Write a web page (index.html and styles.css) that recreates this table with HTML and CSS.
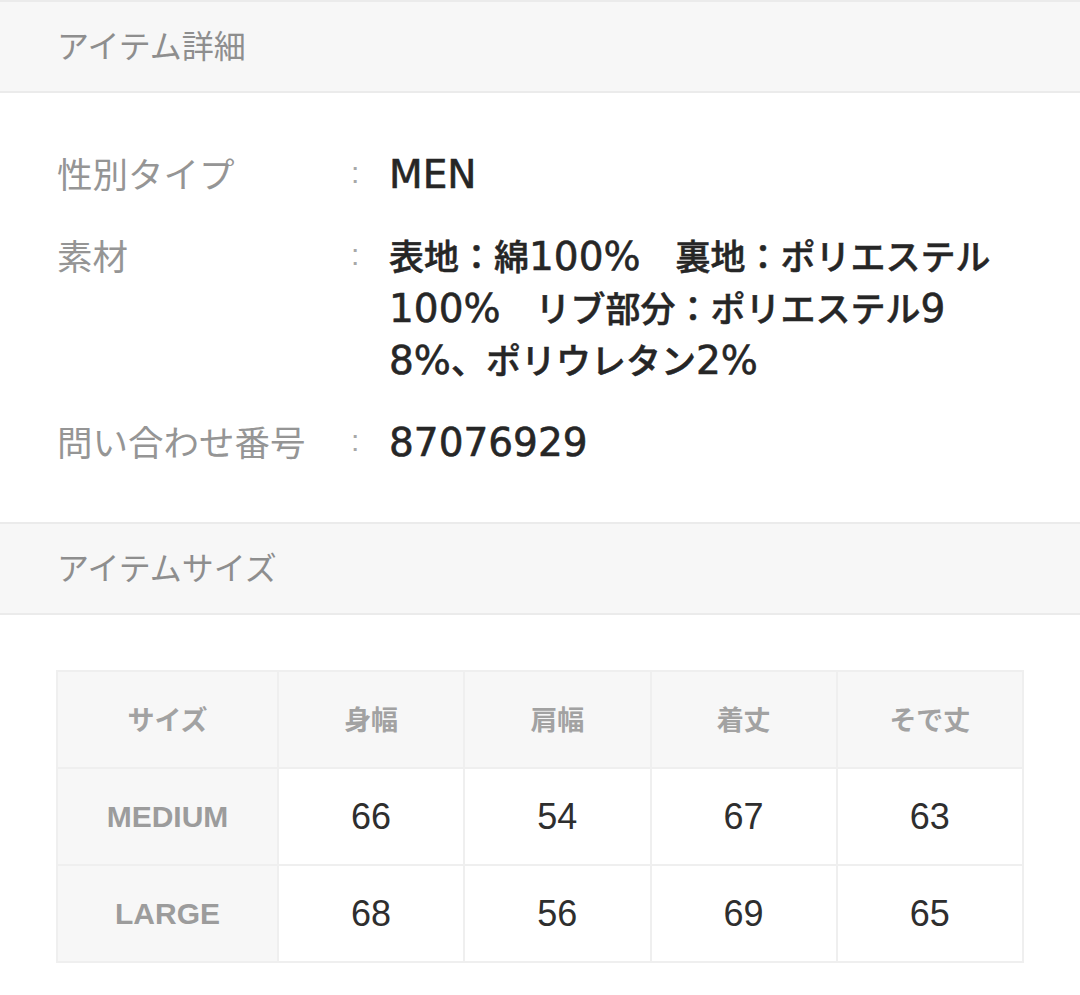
FILE: index.html
```html
<!DOCTYPE html>
<html lang="ja">
<head>
<meta charset="utf-8">
<title>アイテム詳細</title>
<link rel="stylesheet" href="styles.css">
</head>
<body>
<section class="section">
  <h2 class="section-title">アイテム詳細</h2>
  <div class="details">
    <div class="row">
      <div class="label">性別タイプ</div>
      <div class="colon">:</div>
      <div class="value"><span class="latin">MEN</span></div>
    </div>
    <div class="row">
      <div class="label">素材</div>
      <div class="colon">:</div>
      <div class="value">表地：綿<span class="latin">100%</span>　裏地：ポリエステル<br><span class="latin">100%</span>　リブ部分：ポリエステル<span class="latin">9</span><br><span class="latin">8%</span>、ポリウレタン<span class="latin">2%</span></div>
    </div>
    <div class="row">
      <div class="label">問い合わせ番号</div>
      <div class="colon">:</div>
      <div class="value"><span class="latin">87076929</span></div>
    </div>
  </div>
</section>
<section class="section">
  <h2 class="section-title">アイテムサイズ</h2>
  <div class="size-wrap">
    <table class="size-table">
      <colgroup>
        <col class="c-first">
        <col>
        <col>
        <col>
        <col>
      </colgroup>
      <thead>
        <tr>
          <th>サイズ</th>
          <th>身幅</th>
          <th>肩幅</th>
          <th>着丈</th>
          <th>そで丈</th>
        </tr>
      </thead>
      <tbody>
        <tr>
          <th class="size-name">MEDIUM</th>
          <td>66</td>
          <td>54</td>
          <td>67</td>
          <td>63</td>
        </tr>
        <tr>
          <th class="size-name">LARGE</th>
          <td>68</td>
          <td>56</td>
          <td>69</td>
          <td>65</td>
        </tr>
      </tbody>
    </table>
  </div>
</section>
</body>
</html>
```

FILE: styles.css
```css
html, body {
  margin: 0;
  padding: 0;
  background: #ffffff;
}

body {
  width: 1080px;
  font-family: "Noto Sans CJK JP", sans-serif;
  color: #333333;
}

.section-title {
  margin: 0;
  height: 84px;
  box-sizing: content-box;
  padding: 0 57px 5px;
  display: flex;
  align-items: center;
  background: #f7f7f7;
  border-top: 2px solid #ebebeb;
  border-bottom: 2px solid #ebebeb;
  font-size: 32px;
  font-weight: 400;
  color: #8e8e8e;
  line-height: 1;
}

.details {
  padding: 54px 57px 55px;
  display: flex;
  flex-direction: column;
  gap: 30px;
}

.row {
  display: grid;
  grid-template-columns: 294px 38px 1fr;
  align-items: start;
}

.label {
  font-size: 35.5px;
  line-height: 52px;
  color: #959595;
  font-weight: 400;
  white-space: nowrap;
}

.colon {
  font-family: "Liberation Sans", sans-serif;
  font-size: 30px;
  line-height: 52px;
  color: #a8a8a8;
}

.value {
  font-family: "Noto Sans CJK JP", sans-serif;
  font-size: 35px;
  line-height: 52px;
  font-weight: 500;
  color: #262626;
  -webkit-text-stroke: 0.5px #262626;
}

.latin {
  font-family: "DejaVu Sans", sans-serif;
  font-size: 39px;
  font-weight: 400;
  line-height: 1;
  -webkit-text-stroke: 0.6px #262626;
}

.size-wrap {
  padding: 55px 56px 32px;
}

.size-table {
  width: 968px;
  table-layout: fixed;
  border-collapse: collapse;
}

.c-first {
  width: 221px;
}

.size-table th,
.size-table td {
  height: 95px;
  border: 2px solid #efefef;
  text-align: center;
  vertical-align: middle;
  padding: 0;
}

.size-table thead th {
  background: #f7f7f7;
  font-size: 27px;
  font-weight: 700;
  color: #a2a2a2;
  height: 92px;
  padding-bottom: 3px;
}

.size-table .size-name {
  background: #f7f7f7;
  font-family: "Liberation Sans", sans-serif;
  font-size: 30px;
  font-weight: 700;
  color: #9c9c9c;
}

.size-table td {
  background: #ffffff;
  font-family: "Liberation Sans", sans-serif;
  font-size: 36px;
  font-weight: 400;
  color: #2e2e2e;
}
```
